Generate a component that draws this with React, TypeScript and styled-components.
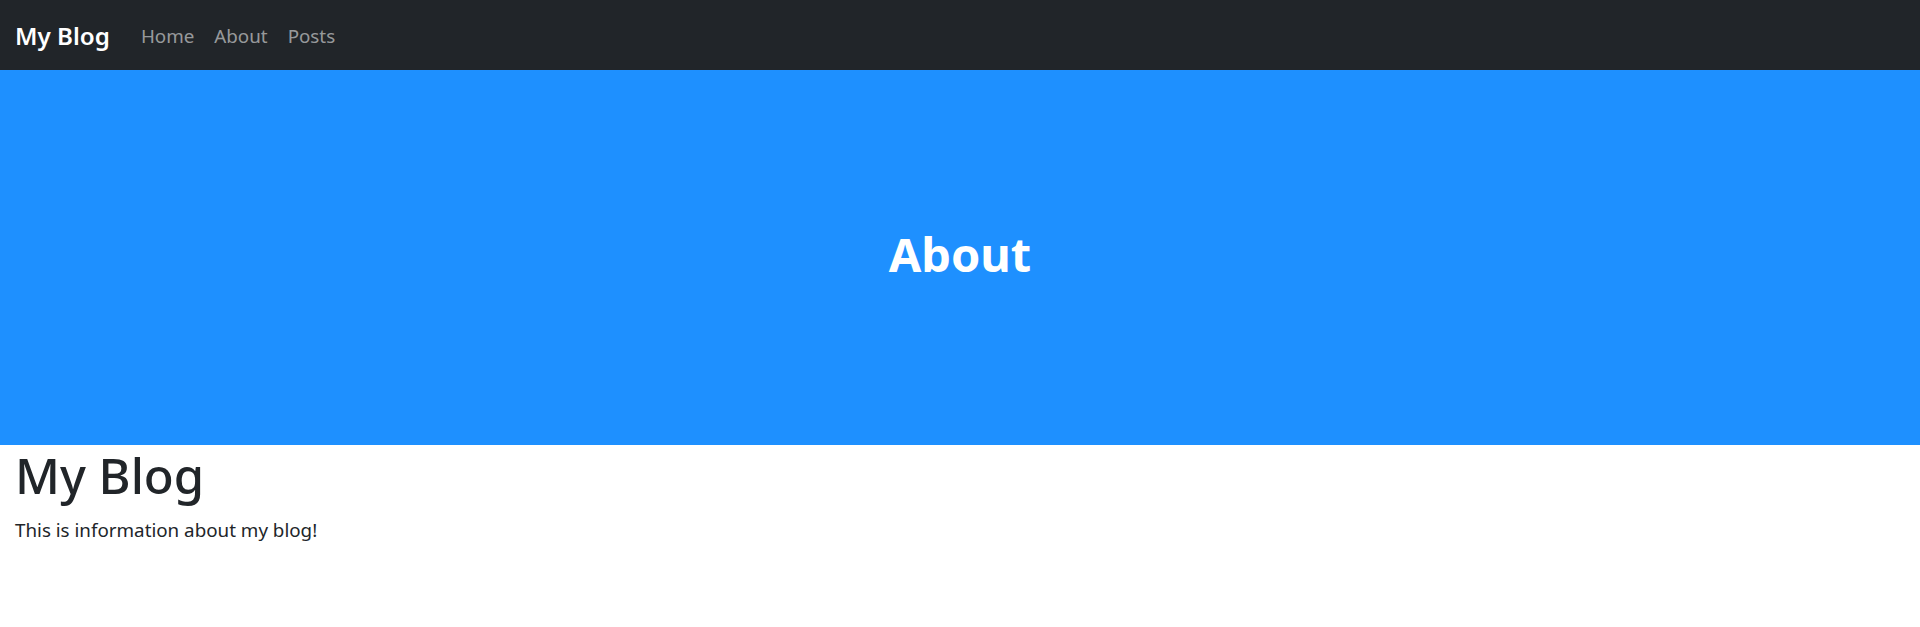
import React from "react";
import styled, { createGlobalStyle } from "styled-components";

const Global = createGlobalStyle`
  html, body { margin: 0; padding: 0; background: #fff; }
  body {
    font-family: "Noto Sans", "Open Sans", sans-serif;
    color: #212529;
    font-size: 18.8px;
    line-height: 30px;
  }
  * { box-sizing: border-box; }
`;

const NavBar = styled.nav`
  height: 70px;
  background: #212529;
  display: flex;
  align-items: center;
  padding: 0 15px;
`;

const Brand = styled.a`
  color: #fff;
  font-size: 24.2px;
  font-weight: 600;
  margin-right: 21px;
  text-decoration: none;
  line-height: 37px;
`;

const NavList = styled.ul`
  display: flex;
  list-style: none;
  margin: 0;
  padding: 0;
`;

const NavLink = styled.a`
  display: block;
  padding: 11px 10px 9px;
  color: rgba(255, 255, 255, 0.55);
  font-size: 18.8px;
  line-height: 30px;
  text-decoration: none;
`;

const Hero = styled.header`
  height: 375px;
  background: #1e90ff;
  display: flex;
  align-items: center;
  justify-content: center;
  padding-bottom: 8px;
`;

const HeroTitle = styled.h1`
  margin: 0;
  color: #fff;
  font-size: 47px;
  font-weight: 700;
  line-height: 60px;
`;

const Content = styled.main`
  padding: 0 15px;
`;

const Title = styled.h1`
  margin: 0 0 10px;
  font-size: 49px;
  font-weight: 500;
  line-height: 60px;
`;

const Text = styled.p`
  margin: 0 0 20px;
  font-size: 18.8px;
  line-height: 30px;
`;

export default function App() {
  return (
    <>
      <Global />
      <NavBar>
        <Brand href="#">My Blog</Brand>
        <NavList>
          <li><NavLink href="#">Home</NavLink></li>
          <li><NavLink href="#">About</NavLink></li>
          <li><NavLink href="#">Posts</NavLink></li>
        </NavList>
      </NavBar>
      <Hero>
        <HeroTitle>About</HeroTitle>
      </Hero>
      <Content>
        <Title>My Blog</Title>
        <Text>This is information about my blog!</Text>
      </Content>
    </>
  );
}
